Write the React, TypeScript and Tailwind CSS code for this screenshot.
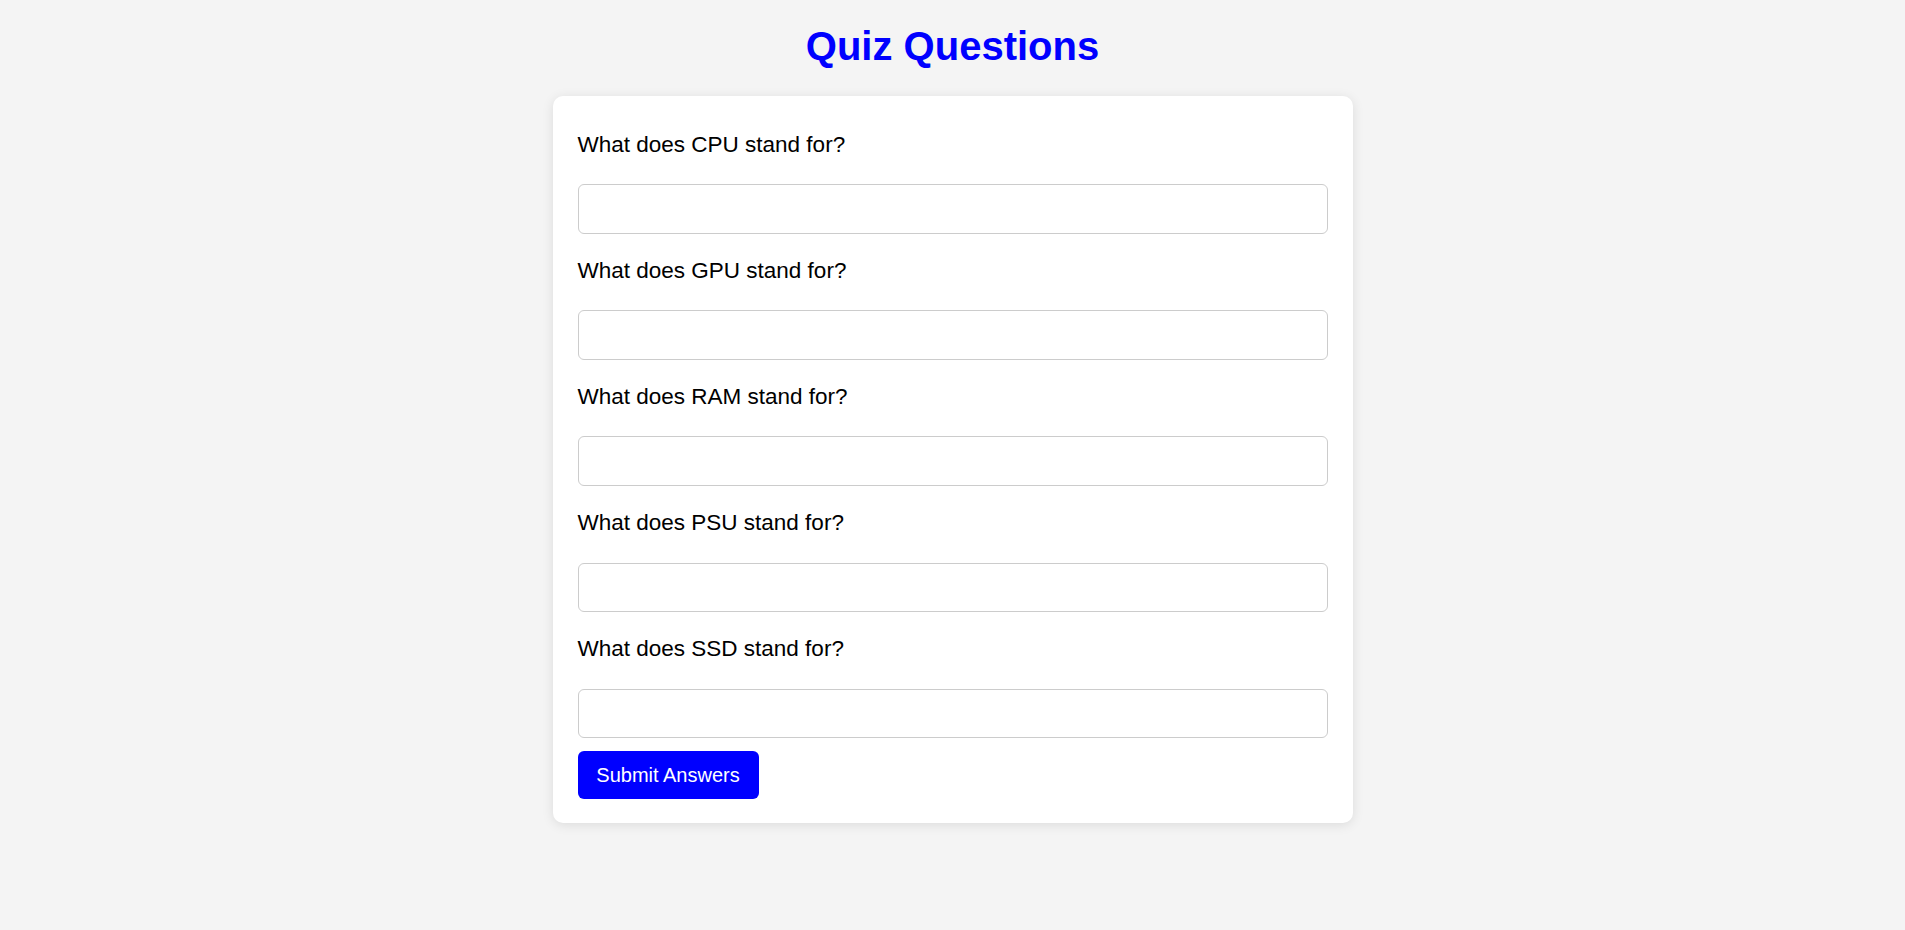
import React from "react";

const questions = ["CPU", "GPU", "RAM", "PSU", "SSD"];

export default function App() {
  return (
    <div
      className="min-h-screen bg-[#f4f4f4] flex flex-col items-center"
      style={{ fontFamily: '"Liberation Sans", Arial, sans-serif' }}
    >
      <h1 className="mt-[22.5px] mb-[27.5px] text-[40px] leading-[46px] font-bold text-[#0000ff]">
        Quiz Questions
      </h1>
      <form
        className="w-[800px] bg-white rounded-[10px] shadow-[0_2px_12px_rgba(0,0,0,0.1)] px-[25px] pt-[11.6px] pb-[24px] flex flex-col"
        onSubmit={(e) => e.preventDefault()}
      >
        {questions.map((q) => (
          <div key={q} className="flex flex-col mt-[24px]">
            <label className="block text-[22.5px] leading-[26px] text-black">
              What does {q} stand for?
            </label>
            <input
              type="text"
              className="mt-[26.7px] h-[49.4px] w-full border border-[#cccccc] rounded-[6px] bg-white px-[12px] text-[20px] outline-none"
            />
          </div>
        ))}
        <div className="mt-[13.5px]">
          <button
            type="submit"
            className="h-[48px] w-[181px] bg-[#0000ff] text-white text-[20px] rounded-[6px] leading-[23px]"
          >
            Submit Answers
          </button>
        </div>
      </form>
    </div>
  );
}
